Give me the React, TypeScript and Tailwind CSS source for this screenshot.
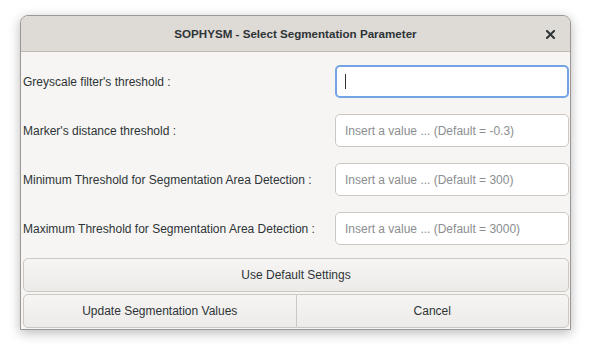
import React from 'react';

const fields = [
  { label: "Greyscale filter's threshold :", placeholder: '', focused: true },
  { label: "Marker's distance threshold :", placeholder: 'Insert a value ... (Default = -0.3)' },
  { label: 'Minimum Threshold for Segmentation Area Detection :', placeholder: 'Insert a value ... (Default = 300)' },
  { label: 'Maximum Threshold for Segmentation Area Detection :', placeholder: 'Insert a value ... (Default = 3000)' },
];

const btn =
  'flex items-center justify-center h-[34px] border border-[#cdc7c2] bg-gradient-to-b from-[#f6f5f4] to-[#edebe9] text-[12px] text-[#2e3436]';

export default function App() {
  return (
    <div className="w-[593px] h-[353px] bg-white pt-[15px] pl-[20px] font-['Liberation_Sans',sans-serif]">
      <div className="w-[551px] h-[315px] flex flex-col rounded-t-[8px] border border-[#9a9794] bg-[#f6f5f4] shadow-[0_3px_12px_rgba(0,0,0,0.28)] overflow-hidden">
        {/* title bar */}
        <div className="relative h-[36px] shrink-0 flex items-center justify-center bg-[#dedad6] border-b border-[#bfb8b1]">
          <span className="text-[11.6px] font-bold text-[#2e3436]">SOPHYSM - Select Segmentation Parameter</span>
          <button className="absolute right-[15px] top-[14px] w-[9px] h-[9px]" aria-label="Close">
            <svg viewBox="0 0 9 9" width="9" height="9">
              <path d="M1 1 L8 8 M8 1 L1 8" stroke="#2e3436" strokeWidth="2" strokeLinecap="square" />
            </svg>
          </button>
        </div>

        <div className="flex flex-col gap-[16px] pt-[13px] pl-[2px] pr-[1px]">
          {fields.map((f) => (
            <div key={f.label} className="flex items-center h-[33px]">
              <span className="w-[312px] text-[12px] text-[#2e3436] whitespace-nowrap">{f.label}</span>
              <div
                className={
                  'flex-1 h-[33px] flex items-center pl-[8px] rounded-[5px] bg-white text-[12px] ' +
                  (f.focused ? 'border-2 border-[#74a3e6]' : 'border border-[#cdc7c2] pl-[9px]')
                }
              >
                {f.focused ? (
                  <span className="w-[1px] h-[15px] bg-[#2e3436]" />
                ) : (
                  <span className="text-[#8b8e8f]">{f.placeholder}</span>
                )}
              </div>
            </div>
          ))}
        </div>

        <div className="flex flex-col gap-[2px] mt-[13px] pl-[2px] pr-[1px]">
          <button className={btn + ' rounded-[5px]'}>Use Default Settings</button>
          <div className="flex">
            <button className={btn + ' flex-1 rounded-l-[5px]'}>Update Segmentation Values</button>
            <button className={btn + ' flex-1 rounded-r-[5px] border-l-0'}>Cancel</button>
          </div>
        </div>
      </div>
    </div>
  );
}
